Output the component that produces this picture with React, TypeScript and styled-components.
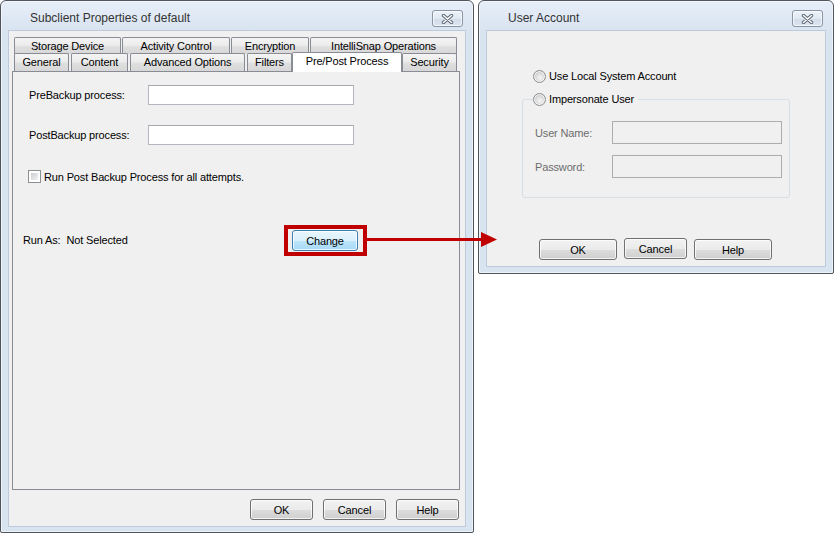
import React from 'react';
import styled, { createGlobalStyle } from 'styled-components';

const Global = createGlobalStyle`
  html, body { margin: 0; padding: 0; background: #fff; }
  body {
    font-family: "Liberation Sans", Arial, sans-serif;
    font-size: 11px;
    color: #000;
  }
  #root { width: 834px; height: 534px; }
`;

const Desktop = styled.div`
  position: relative;
  width: 834px;
  height: 534px;
  overflow: hidden;
  display: flex;
  align-items: flex-start;
  gap: 4px;
  background: #fff;
  letter-spacing: -0.15px;
`;

const Window = styled.div<{ $w: number; $h: number }>`
  box-sizing: border-box;
  flex: none;
  width: ${(p) => p.$w}px;
  height: ${(p) => p.$h}px;
  border: 1px solid #50555c;
  border-radius: 6px 6px 2px 2px;
  background: linear-gradient(#e6eef8, #d9e4f1 30px, #d9e4f1);
  box-shadow: inset 0 0 0 1px rgba(255, 255, 255, 0.55);
  padding: 0 7px ${(p) => (p.$h > 300 ? 5 : 6)}px;
  display: flex;
  flex-direction: column;
`;

const TitleBar = styled.div`
  flex: none;
  height: 29px;
  box-sizing: border-box;
  padding: 9px 3px 0 22px;
  display: flex;
  align-items: flex-start;
  justify-content: space-between;
`;

const Title = styled.div`
  font-size: 12px;
  line-height: 17px;
  letter-spacing: 0;
  color: #333;
`;

const CloseButton = styled.div`
  box-sizing: border-box;
  width: 31px;
  height: 17px;
  border: 1px solid #8993a3;
  border-radius: 3px;
  background: linear-gradient(#eef3f9, #dfe7f1 50%, #d2dcea 51%, #dbe4ef);
  box-shadow: inset 0 0 0 1px rgba(255, 255, 255, 0.7);
  display: flex;
  align-items: center;
  justify-content: center;
`;

const Client = styled.div<{ $pad: string }>`
  flex: 1;
  box-sizing: border-box;
  background: #f0f0f0;
  border: 1px solid #bccadb;
  padding: ${(p) => p.$pad};
  display: flex;
  flex-direction: column;
  align-items: flex-start;
`;

/* ---------- tabs ---------- */

const TabStrip = styled.div`
  position: relative;
  z-index: 1;
  padding-left: 2px;
  display: flex;
  flex-direction: column;
`;

const TabRow = styled.div<{ $h: number; $top: number }>`
  position: relative;
  display: flex;
  align-items: flex-end;
  height: ${(p) => p.$h}px;
  margin-top: ${(p) => p.$top}px;
`;

const Tab = styled.div<{ $w: number; $gap: number; $sel?: boolean; $lh: number }>`
  box-sizing: border-box;
  flex: none;
  position: relative;
  width: ${(p) => p.$w}px;
  margin-left: ${(p) => p.$gap}px;
  height: ${(p) => (p.$sel ? '20px' : '100%')};
  margin-bottom: ${(p) => (p.$sel ? '-1px' : '0')};
  z-index: ${(p) => (p.$sel ? 2 : 0)};
  border: 1px solid #898c95;
  border-bottom: none;
  border-radius: 2px 2px 0 0;
  background: ${(p) =>
    p.$sel ? '#ffffff' : 'linear-gradient(#f4f4f4, #ececec 45%, #dfdfdf 55%, #d7d7d7)'};
  text-align: center;
  line-height: ${(p) => p.$lh}px;
  white-space: nowrap;
  overflow: hidden;
`;

const Panel = styled.div`
  box-sizing: border-box;
  flex: none;
  width: 448px;
  height: 419px;
  border: 1px solid #898c95;
  background: #f0f0f0;
  padding: 13px 0 0 16px;
  display: flex;
  flex-direction: column;
  align-items: flex-start;
`;

const FieldRow = styled.div<{ $top: number }>`
  display: flex;
  align-items: center;
  margin-top: ${(p) => p.$top}px;
`;

const FieldLabel = styled.span<{ $w: number; $disabled?: boolean }>`
  flex: none;
  width: ${(p) => p.$w}px;
  color: ${(p) => (p.$disabled ? '#6d6d6d' : '#000')};
`;

const TextBox = styled.div<{ $w: number; $h: number; $disabled?: boolean }>`
  box-sizing: border-box;
  flex: none;
  width: ${(p) => p.$w}px;
  height: ${(p) => p.$h}px;
  border: 1px solid ${(p) => (p.$disabled ? '#adadad' : '#b3b6bd')};
  border-top-color: ${(p) => (p.$disabled ? '#adadad' : '#a5a8b0')};
  background: ${(p) => (p.$disabled ? '#f0f0f0' : '#fff')};
`;

const CheckRow = styled.label`
  display: flex;
  align-items: center;
  margin-top: 25px;
  margin-left: -1px;
  height: 13px;
  gap: 3px;
`;

const CheckBox = styled.span`
  box-sizing: border-box;
  flex: none;
  width: 13px;
  height: 13px;
  border: 1px solid #8e8f8f;
  background: #fff;
  padding: 2px;
  display: flex;
  &::after {
    content: '';
    flex: 1;
    background: linear-gradient(135deg, #c9cdd3, #f2f2f2);
  }
`;

const RunAsRow = styled.div`
  display: flex;
  align-items: center;
  margin-top: 42px;
  margin-left: -6px;
`;

const RunAsText = styled.span`
  flex: none;
  width: 261px;
  display: flex;
  margin-top: -1px;
`;

const RunAsValue = styled.span`
  margin-left: 6px;
`;

const Highlight = styled.div`
  flex: none;
  border: 4px solid #c00000;
  padding: 1px 5px 1px 4px;
  display: flex;
`;

const Button = styled.div<{ $w: number; $h?: number; $blue?: boolean; $shift?: number }>`
  box-sizing: border-box;
  flex: none;
  width: ${(p) => p.$w}px;
  height: ${(p) => p.$h ?? 21}px;
  margin-top: ${(p) => p.$shift ?? 0}px;
  border: 1px solid ${(p) => (p.$blue ? '#3c7fb1' : '#707070')};
  border-radius: 3px;
  background: ${(p) =>
    p.$blue
      ? 'linear-gradient(#eaf6fd, #d9f0fc 50%, #bee6fd 51%, #a7d9f5)'
      : 'linear-gradient(#f2f2f2, #ebebeb 50%, #dddddd 51%, #cfcfcf)'};
  box-shadow: inset 0 0 0 1px rgba(255, 255, 255, 0.75);
  display: flex;
  align-items: center;
  justify-content: center;
  color: #000;
`;

const ButtonBar = styled.div<{ $top: number; $left?: number; $gap: number }>`
  display: flex;
  align-items: flex-start;
  gap: ${(p) => p.$gap}px;
  margin-top: ${(p) => p.$top}px;
  margin-left: ${(p) => p.$left ?? 0}px;
  align-self: ${(p) => (p.$left === undefined ? 'flex-end' : 'flex-start')};
  margin-right: ${(p) => (p.$left === undefined ? 1 : 0)}px;
`;

/* ---------- user account ---------- */

const RadioRow = styled.label`
  display: flex;
  align-items: center;
  gap: 3px;
  height: 13px;
  line-height: 13px;
  margin-left: 46px;
`;

const Radio = styled.span`
  box-sizing: border-box;
  flex: none;
  width: 13px;
  height: 13px;
  border-radius: 50%;
  border: 1px solid #8e8f8f;
  background: radial-gradient(circle at 55% 60%, #f6f6f6 0, #e2e2e2 35%, #c4c6c9 75%, #d8d8d8 100%);
  box-shadow: inset 0 0 0 1px #f4f4f4;
`;

const Group = styled.fieldset`
  box-sizing: border-box;
  width: 268px;
  margin: 10px 0 0 35px;
  padding: 15px 0 19px 12px;
  border: 1px solid #d5dfe5;
  border-radius: 3px;
  min-inline-size: 0;
`;

const GroupLegend = styled.legend`
  margin-left: -2px;
  padding: 0 4px 0 0;
  line-height: 13px;
`;

const LegendRadio = styled(RadioRow)`
  margin-left: 0;
`;

const GroupBody = styled.div`
  display: flex;
  flex-direction: column;
  gap: 11px;
`;

const FormLine = styled.div`
  display: flex;
  align-items: center;
`;

const Arrow = styled.svg`
  position: absolute;
  left: 0;
  top: 0;
  pointer-events: none;
`;

const CloseGlyph = () => (
  <svg width="13" height="10" viewBox="0 0 13 10">
    <path d="M2.5 1.5 L10.5 8.5 M10.5 1.5 L2.5 8.5" stroke="#56606f" strokeWidth="3.4" strokeLinecap="round" />
    <path d="M2.5 1.5 L10.5 8.5 M10.5 1.5 L2.5 8.5" stroke="#ffffff" strokeWidth="1.6" strokeLinecap="round" />
  </svg>
);

const row1 = [
  { t: 'Storage Device', w: 107, g: 0 },
  { t: 'Activity Control', w: 108, g: 1 },
  { t: 'Encryption', w: 78, g: 1 },
  { t: 'IntelliSnap Operations', w: 147, g: 1 },
];

const row2 = [
  { t: 'General', w: 55, g: 0 },
  { t: 'Content', w: 57, g: 2 },
  { t: 'Advanced Options', w: 115, g: 2 },
  { t: 'Filters', w: 45, g: 2 },
  { t: 'Pre/Post Process', w: 110, g: 0, sel: true },
  { t: 'Security', w: 55, g: 0 },
];

export default function App() {
  return (
    <Desktop>
      <Global />
      <Window $w={474} $h={533}>
        <TitleBar>
          <Title>Subclient Properties of default</Title>
          <CloseButton>
            <CloseGlyph />
          </CloseButton>
        </TitleBar>
        <Client $pad="6px 5px 6px 3px">
          <TabStrip>
            <TabRow $h={17} $top={0}>
              {row1.map((t) => (
                <Tab key={t.t} $w={t.w} $gap={t.g} $lh={16}>
                  {t.t}
                </Tab>
              ))}
            </TabRow>
            <TabRow $h={18} $top={-1}>
              {row2.map((t) => (
                <Tab key={t.t} $w={t.w} $gap={t.g} $sel={t.sel} $lh={17}>
                  {t.t}
                </Tab>
              ))}
            </TabRow>
          </TabStrip>
          <Panel>
            <FieldRow $top={0}>
              <FieldLabel $w={119}>PreBackup process:</FieldLabel>
              <TextBox $w={206} $h={20} />
            </FieldRow>
            <FieldRow $top={20}>
              <FieldLabel $w={119}>PostBackup process:</FieldLabel>
              <TextBox $w={206} $h={20} />
            </FieldRow>
            <CheckRow>
              <CheckBox />
              Run Post Backup Process for all attempts.
            </CheckRow>
            <RunAsRow>
              <RunAsText>
                Run As:<RunAsValue>Not Selected</RunAsValue>
              </RunAsText>
              <Highlight>
                <Button $w={66} $blue>
                  Change
                </Button>
              </Highlight>
            </RunAsRow>
          </Panel>
          <ButtonBar $top={9} $gap={10}>
            <Button $w={63}>OK</Button>
            <Button $w={63}>Cancel</Button>
            <Button $w={63}>Help</Button>
          </ButtonBar>
        </Client>
      </Window>

      <Window $w={356} $h={274}>
        <TitleBar>
          <Title>User Account</Title>
          <CloseButton>
            <CloseGlyph />
          </CloseButton>
        </TitleBar>
        <Client $pad="39px 0 0 0">
          <RadioRow>
            <Radio />
            Use Local System Account
          </RadioRow>
          <Group>
            <GroupLegend>
              <LegendRadio>
                <Radio />
                Impersonate User
              </LegendRadio>
            </GroupLegend>
            <GroupBody>
              <FormLine>
                <FieldLabel $w={77} $disabled>
                  User Name:
                </FieldLabel>
                <TextBox $w={170} $h={23} $disabled />
              </FormLine>
              <FormLine>
                <FieldLabel $w={77} $disabled>
                  Password:
                </FieldLabel>
                <TextBox $w={170} $h={23} $disabled />
              </FormLine>
            </GroupBody>
          </Group>
          <ButtonBar $top={41} $left={52} $gap={7}>
            <Button $w={78}>OK</Button>
            <Button $w={63} $shift={-1}>
              Cancel
            </Button>
            <Button $w={78}>Help</Button>
          </ButtonBar>
        </Client>
      </Window>

      <Arrow width="834" height="534" viewBox="0 0 834 534">
        <rect x="367" y="238" width="115" height="3" fill="#c00000" />
        <polygon points="481,232 497,239.5 481,247" fill="#c00000" />
      </Arrow>
    </Desktop>
  );
}
